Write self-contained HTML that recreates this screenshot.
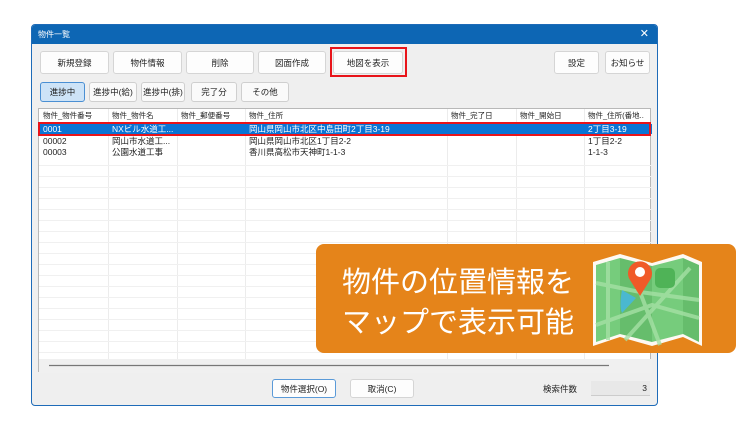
<!DOCTYPE html>
<html><head><meta charset="utf-8"><style>
*{box-sizing:border-box;margin:0;padding:0}
body{width:750px;height:430px;background:#fff;position:relative;overflow:hidden;font-family:"Liberation Sans","Noto Sans CJK JP",sans-serif;font-size:9px;color:#222}
.a{position:absolute}
.win{left:31px;top:24px;width:627px;height:382px;background:#efefef;border:1px solid #1e6bb8;border-radius:4px;overflow:hidden}
.tb{left:0;top:0;width:100%;height:19px;background:#0d66b4;color:#fff;font-size:8px;line-height:19px;padding-left:6px}
.btn{background:#fdfdfd;border:1px solid #d5d5d5;border-radius:3px;text-align:center;font-size:8.5px;color:#222}
.tab{background:#fafafa;border:1px solid #cfcfcf;border-radius:3px;text-align:center;font-size:8.5px;line-height:18px}
.tbl{left:38px;top:108px;width:613px;height:264px;background:#fff;border:1px solid #b8b8b8}
.cell{position:absolute;font-size:8.5px;line-height:10px;white-space:nowrap;overflow:hidden}
</style></head><body>
<div class="a win">
<div class="a tb">物件一覧<span style="position:absolute;right:8px;top:0;font-size:11px">✕</span></div>
</div>
<div class="a btn" style="left:40px;top:51px;width:69px;height:23px;line-height:22px">新規登録</div>
<div class="a btn" style="left:113px;top:51px;width:69px;height:23px;line-height:22px">物件情報</div>
<div class="a btn" style="left:186px;top:51px;width:68px;height:23px;line-height:22px">削除</div>
<div class="a btn" style="left:258px;top:51px;width:68px;height:23px;line-height:22px">図面作成</div>
<div class="a btn" style="left:333px;top:51px;width:70px;height:23px;line-height:22px">地図を表示</div>
<div class="a" style="left:330px;top:47px;width:77px;height:30px;border:2px solid #e8141a"></div>
<div class="a btn" style="left:554px;top:51px;width:45px;height:23px;line-height:22px">設定</div>
<div class="a btn" style="left:605px;top:51px;width:45px;height:23px;line-height:22px">お知らせ</div>
<div class="a tab" style="left:40px;top:82px;width:45px;height:20px;background:#cde3f7;border-color:#4a8fd3">進捗中</div>
<div class="a tab" style="left:89px;top:82px;width:48px;height:20px">進捗中(給)</div>
<div class="a tab" style="left:141px;top:82px;width:44px;height:20px">進捗中(排)</div>
<div class="a tab" style="left:191px;top:82px;width:46px;height:20px">完了分</div>
<div class="a tab" style="left:241px;top:82px;width:48px;height:20px">その他</div>
<div class="a tbl">
<svg class="a" style="left:0;top:0" width="613" height="264">
<g stroke="#ececec" stroke-width="1">
<line x1="69.5" y1="0" x2="69.5" y2="252"/><line x1="138.5" y1="0" x2="138.5" y2="252"/><line x1="206.5" y1="0" x2="206.5" y2="252"/><line x1="408.5" y1="0" x2="408.5" y2="252"/><line x1="477.5" y1="0" x2="477.5" y2="252"/><line x1="545.5" y1="0" x2="545.5" y2="252"/>
</g>
<g stroke="#f0f0f0"><line x1="0" y1="13.5" x2="613" y2="13.5"/>
<line x1="0" y1="56.5" x2="613" y2="56.5"/><line x1="0" y1="67.5" x2="613" y2="67.5"/><line x1="0" y1="78.5" x2="613" y2="78.5"/><line x1="0" y1="89.5" x2="613" y2="89.5"/><line x1="0" y1="100.5" x2="613" y2="100.5"/><line x1="0" y1="111.5" x2="613" y2="111.5"/><line x1="0" y1="122.5" x2="613" y2="122.5"/><line x1="0" y1="133.5" x2="613" y2="133.5"/><line x1="0" y1="144.5" x2="613" y2="144.5"/><line x1="0" y1="155.5" x2="613" y2="155.5"/><line x1="0" y1="166.5" x2="613" y2="166.5"/><line x1="0" y1="177.5" x2="613" y2="177.5"/><line x1="0" y1="188.5" x2="613" y2="188.5"/><line x1="0" y1="199.5" x2="613" y2="199.5"/><line x1="0" y1="210.5" x2="613" y2="210.5"/><line x1="0" y1="221.5" x2="613" y2="221.5"/><line x1="0" y1="232.5" x2="613" y2="232.5"/><line x1="0" y1="243.5" x2="613" y2="243.5"/></g>
<rect x="0" y="250" width="613" height="14" fill="#f0f0f0"/>
<line x1="10" y1="256.5" x2="570" y2="256.5" stroke="#777" stroke-width="1.2"/>
<rect x="0" y="15" width="613" height="10" fill="#0a74d4"/>
</svg>
<div class="cell" style="left:4px;top:2px;font-size:7.5px">物件_物件番号</div>
<div class="cell" style="left:73px;top:2px;font-size:7.5px">物件_物件名</div>
<div class="cell" style="left:142px;top:2px;font-size:7.5px">物件_郵便番号</div>
<div class="cell" style="left:210px;top:2px;font-size:7.5px">物件_住所</div>
<div class="cell" style="left:412px;top:2px;font-size:7.5px">物件_完了日</div>
<div class="cell" style="left:481px;top:2px;font-size:7.5px">物件_開始日</div>
<div class="cell" style="left:549px;top:2px;width:62px;font-size:7.5px">物件_住所(番地..</div>
<div class="cell" style="left:4px;top:15px;color:#fff">0001</div>
<div class="cell" style="left:73px;top:15px;color:#fff">NXビル水道工...</div>
<div class="cell" style="left:210px;top:15px;color:#fff">岡山県岡山市北区中島田町2丁目3-19</div>
<div class="cell" style="left:549px;top:15px;color:#fff">2丁目3-19</div>
<div class="cell" style="left:4px;top:27px">00002</div>
<div class="cell" style="left:73px;top:27px">岡山市水道工...</div>
<div class="cell" style="left:210px;top:27px">岡山県岡山市北区1丁目2-2</div>
<div class="cell" style="left:549px;top:27px">1丁目2-2</div>
<div class="cell" style="left:4px;top:38px">00003</div>
<div class="cell" style="left:73px;top:38px">公園水道工事</div>
<div class="cell" style="left:210px;top:38px">香川県高松市天神町1-1-3</div>
<div class="cell" style="left:549px;top:38px">1-1-3</div>
</div>
<div class="a" style="left:38px;top:122px;width:613px;height:14px;border:2px solid #e8141a"></div>
<div class="a btn" style="left:272px;top:379px;width:64px;height:19px;line-height:18px;border-color:#5a9ad8">物件選択(O)</div>
<div class="a btn" style="left:350px;top:379px;width:64px;height:19px;line-height:18px">取消(C)</div>
<div class="a" style="left:543px;top:383px;font-size:8.5px">検索件数</div>
<div class="a" style="left:591px;top:381px;width:59px;height:15px;background:#e8e8e8;border-bottom:1px solid #ccc;text-align:right;padding-right:3px;font-size:8.5px;line-height:14px">3</div>
<div class="a" style="left:316px;top:244px;width:420px;height:109px;background:#e5841a;border-radius:8px"></div>
<div class="a" style="left:320px;top:263px;width:276px;color:#fff;font-size:29px;line-height:40px;text-align:center;white-space:nowrap">物件の位置情報を<br>マップで表示可能</div>
<svg class="a" style="left:590px;top:250px" width="116" height="100" viewBox="590 250 116 100">
<polygon points="593,262 620,254 652,263 683,254 702,262 702,346 683,337 652,346 620,337 593,346" fill="#fff" opacity=".95"/>
<polygon points="596,265 620,258 620,334 596,342" fill="#76cc7c"/>
<polygon points="620,258 652,266 652,342 620,334" fill="#66bd6c"/>
<polygon points="652,266 683,258 683,334 652,342" fill="#76cc7c"/>
<polygon points="683,258 699,265 699,342 683,334" fill="#66bd6c"/>
<g stroke="#a5e0a5" stroke-width="4" fill="none" opacity=".8">
<path d="M596,283 L640,292 L699,300"/><path d="M596,325 L652,305 L699,318"/><path d="M625,340 L690,268"/><path d="M608,262 L608,340"/><path d="M640,292 L660,345"/>
</g>
<rect x="655" y="268" width="20" height="20" rx="5" fill="#4fb357"/>
<path d="M622,290 L636,298 L622,313 Q619,306 622,290Z" fill="#4ab8d0"/>
<path d="M640,296 L630,280 A12,12 0 1 1 650,280 Z" fill="#f05a28"/>
<circle cx="640" cy="272" r="5" fill="#fff"/>
</svg>
</body></html>
